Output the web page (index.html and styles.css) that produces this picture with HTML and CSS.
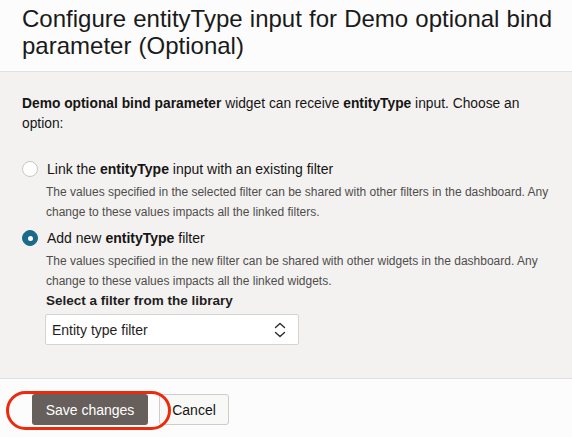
FILE: index.html
```html
<!DOCTYPE html>
<html lang="en">
<head>
<meta charset="utf-8">
<title>Configure entityType input</title>
<link rel="stylesheet" href="styles.css">
</head>
<body>
<div class="dialog">
  <header class="dlg-header">
    <h1 class="dlg-title">Configure entityType input for Demo optional bind parameter (Optional)</h1>
  </header>
  <section class="dlg-body">
    <p class="intro"><b>Demo optional bind parameter</b> widget can receive <b>entityType</b> input. Choose an option:</p>
    <div class="option">
      <div class="radio-row">
        <span class="radio"></span>
        <span class="radio-label">Link the <b>entityType</b> input with an existing filter</span>
      </div>
      <p class="desc">The values specified in the selected filter can be shared with other filters in the dashboard. Any change to these values impacts all the linked filters.</p>
    </div>
    <div class="option">
      <div class="radio-row">
        <span class="radio checked"></span>
        <span class="radio-label">Add new <b>entityType</b> filter</span>
      </div>
      <p class="desc">The values specified in the new filter can be shared with other widgets in the dashboard. Any change to these values impacts all the linked widgets.</p>
      <div class="field-label">Select a filter from the library</div>
      <div class="select">
        <span class="select-value">Entity type filter</span>
        <svg class="chev" width="12" height="16" viewBox="0 0 12 16" fill="none" stroke="#2b2b2b" stroke-width="1.4" stroke-linecap="round" stroke-linejoin="round">
          <path d="M1.5 5.5 L6 1.5 L10.5 5.5"/>
          <path d="M1.5 10.5 L6 14.5 L10.5 10.5"/>
        </svg>
      </div>
    </div>
  </section>
  <footer class="dlg-footer">
    <button class="btn btn-primary">Save changes</button>
    <button class="btn btn-secondary">Cancel</button>
    <span class="highlight"></span>
  </footer>
</div>
</body>
</html>
```
FILE: styles.css
```css
html, body {
  margin: 0;
  padding: 0;
  background: #fcfcfc;
}
body {
  font-family: "Liberation Sans", Arial, Helvetica, sans-serif;
  color: #161513;
  width: 572px;
  height: 437px;
  overflow: hidden;
}
.dialog {
  display: flex;
  flex-direction: column;
  height: 437px;
}
.dlg-header {
  background: #fcfcfc;
  padding: 5px 4px 12px 22px;
  border-bottom: 1px solid #e2e1df;
}
.dlg-title {
  margin: 0;
  font-size: 24px;
  line-height: 27px;
  font-weight: 400;
  word-spacing: 0.5px;
  color: #1a1a1a;
}
.dlg-body {
  background: #f3f2f1;
  padding: 22px 18px 0 22px;
  height: 284px;
  border-bottom: 1px solid #e2e1df;
}
.intro {
  margin: 0 0 25px 0;
  font-size: 13.8px;
  line-height: 20px;
}
.option {
  margin-bottom: 6px;
}
.radio-row {
  display: flex;
  align-items: center;
  gap: 9px;
  font-size: 14px;
  line-height: 20px;
}
.radio {
  width: 14px;
  height: 14px;
  border-radius: 50%;
  background: #ffffff;
  border: 1px solid #c9c7c4;
  box-sizing: content-box;
  flex: none;
  display: flex;
  align-items: center;
  justify-content: center;
}
.radio.checked {
  background: #1c6a8a;
  border-color: #1c6a8a;
}
.radio.checked::after {
  content: "";
  width: 5px;
  height: 5px;
  border-radius: 50%;
  background: #ffffff;
}
.desc {
  margin: 3px 0 0 24px;
  font-size: 12px;
  line-height: 20px;
  color: #4f4d4b;
}
.field-label {
  margin: 0 0 3px 24px;
  font-size: 13.5px;
  line-height: 20px;
  font-weight: 700;
  color: #1f1e1d;
}
.select {
  margin-left: 23px;
  height: 29px;
  background: #ffffff;
  border: 1px solid #d6d4d1;
  border-radius: 2px;
  display: flex;
  align-items: center;
  justify-content: space-between;
  padding: 0 12px 0 6px;
  box-sizing: content-box;
  width: 234px;
}
.select-value {
  font-size: 14px;
  color: #1f1e1d;
}
.chev {
  display: block;
}
.dlg-footer {
  position: relative;
  flex: 1;
  background: #fcfcfc;
  display: flex;
  align-items: flex-start;
  gap: 11px;
  padding: 15px 0 0 32px;
}
.btn {
  font-family: "Liberation Sans", Arial, Helvetica, sans-serif;
  font-size: 14px;
  height: 31px;
  border-radius: 3px;
  cursor: pointer;
}
.btn-primary {
  width: 116px;
  background: #675f5b;
  color: #ffffff;
  border: none;
}
.btn-secondary {
  width: 70px;
  background: #f8f8f7;
  color: #161513;
  border: 1px solid #cfcdca;
  padding: 0;
  text-align: center;
}
.highlight {
  position: absolute;
  left: 6px;
  top: 12px;
  width: 159px;
  height: 33px;
  border: 3px solid #ec2a0e;
  border-radius: 20px;
  pointer-events: none;
}
```
